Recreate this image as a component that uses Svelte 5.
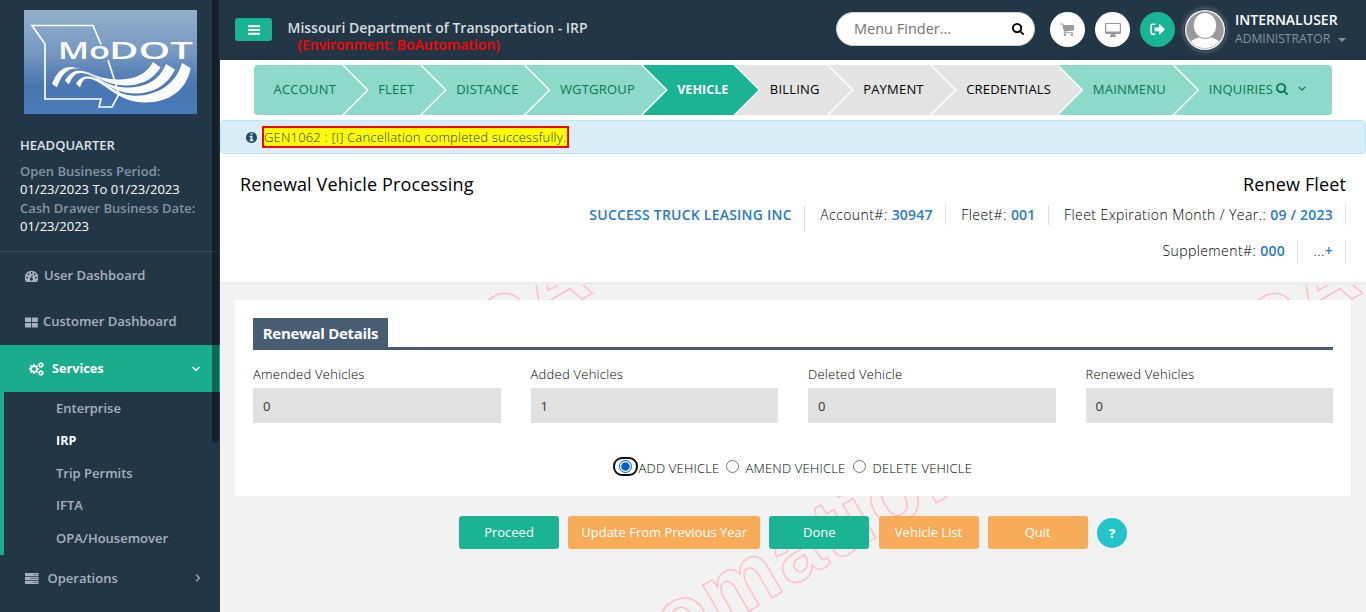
<script>
  const steps = [
    { label: 'ACCOUNT', kind: 'done', w: 112.8 },
    { label: 'FLEET', kind: 'done', w: 101 },
    { label: 'DISTANCE', kind: 'done', w: 126.7 },
    { label: 'WGTGROUP', kind: 'done', w: 140.3 },
    { label: 'VEHICLE', kind: 'active', w: 115.7 },
    { label: 'BILLING', kind: 'todo', w: 116.3 },
    { label: 'PAYMENT', kind: 'todo', w: 126 },
    { label: 'CREDENTIALS', kind: 'todo', w: 149.7 },
    { label: 'MAINMENU', kind: 'done', w: 138.8 },
    { label: 'INQUIRIES', kind: 'done', w: 157.7 }
  ];
  const services = ['Enterprise', 'IRP', 'Trip Permits', 'IFTA', 'OPA/Housemover'];
  const fields = [
    ['Amended Vehicles', '0'],
    ['Added Vehicles', '1'],
    ['Deleted Vehicle', '0'],
    ['Renewed Vehicles', '0']
  ];
  const actions = [
    ['Proceed', 'green', 100],
    ['Update From Previous Year', 'orange', 192],
    ['Done', 'green', 100],
    ['Vehicle List', 'orange', 100],
    ['Quit', 'orange', 100]
  ];
  const marks = [[436.5, 383], [1206.5, 383], [437, 791]];
  const searchPath = 'M1216 832q0-185-131.5-316.5t-316.5-131.5-316.5 131.5-131.5 316.5 131.5 316.5 316.5 131.5 316.5-131.5 131.5-316.5zm512 832q0 52-38 90t-90 38q-54 0-90-38l-343-342q-179 124-399 124-143 0-273.5-55.5t-225-150-150-225-55.5-273.5 55.5-273.5 150-225 225-150 273.5-55.5 273.5 55.5 225 150 150 225 55.5 273.5q0 220-124 399l343 343q37 37 37 90z';
  const cogPath = 'M896 896q0-106-75-181t-181-75-181 75-75 181 75 181 181 75 181-75 75-181zm384-91v185q0 10-7 19.5t-16 10.5l-155 24q-11 35-32 76 34 48 90 115 7 11 7 20 0 12-7 19-23 30-82.5 89.5t-78.5 59.5q-11 0-21-7l-115-90q-37 19-77 31-11 108-23 155-7 24-30 24h-186q-11 0-20-7.5t-10-17.5l-23-153q-34-10-75-31l-118 89q-7 7-20 7-11 0-21-8-144-133-144-160 0-9 7-19 10-14 41-53t47-61q-23-44-35-82l-152-24q-10-1-17-9.5t-7-19.5v-185q0-10 7-19.5t16-10.5l155-24q11-35 32-76-34-48-90-115-7-11-7-20 0-12 7-20 22-30 82-89t79-59q11 0 21 7l115 90q34-18 77-32 11-108 23-154 7-24 30-24h186q11 0 20 7.5t10 17.5l23 153q34 10 75 31l118-89q8-7 20-7 11 0 21 8 144 133 144 160 0 8-7 19-12 16-42 54t-45 60q23 48 34 82l152 23q10 2 17 10.5t7 19.5z';
  let choice = $state('add');
</script>

<div class="app">
  <aside>
    <svg class="logo" width="173" height="104" viewBox="0 0 173 104">
      <defs>
        <linearGradient id="sky" x1="0" y1="0" x2="0" y2="1">
          <stop offset="0" stop-color="#93afca" />
          <stop offset=".4" stop-color="#7799c2" />
          <stop offset=".72" stop-color="#4a76b1" />
          <stop offset="1" stop-color="#4a7ab8" />
        </linearGradient>
      </defs>
      <rect width="173" height="104" fill="url(#sky)" />
      <path d="M77 34.500 69 15.500H8L21 34v55h56l-2 8h13l7-13-11-34" fill="none" stroke="#fff" stroke-width="1.700" />
      <g fill="#fff">
        <path d="M28 74C33 61 40 56 49 57.200c10 1.300 17 7 28 10 8 2 15 2.500 23 2 15-1 24-8 29-17.200l7.500 5.500C129 70 116 75.500 102 75.500c-24 0-37-16.500-50-17-9-.3-15 7-19 18.800z" />
        <path d="M41 70.500c5-8.500 10-10.500 16-9.700 14 2 24 16.700 45 16.700 20 0 33-7 40-23.500l9 5.500C143 76 129 83.500 111 83.500c-25 0-37-19-53-20.500-7-.6-10 4-13 11.500z" />
        <path d="M52 73.500c4-6 8-7.500 13-7 15 2 25 19 46 19.200 22 .2 41-11.700 47-32.700l8.500 5C163 80 145 92.500 121 92.500c-29 0-41-22.500-57-24-4-.3-6 3-8 9z" />
      </g>
      <g fill="#fff" font-family="Open Sans, sans-serif" font-size="23">
        <text x="34" y="48.500" textLength="31" lengthAdjust="spacingAndGlyphs">M</text>
        <text x="65" y="48.500" textLength="21" lengthAdjust="spacingAndGlyphs">o</text>
        <text x="85" y="48.500" textLength="84" lengthAdjust="spacingAndGlyphs">DOT</text>
      </g>
    </svg>
    <div class="office">
      <strong>HEADQUARTER</strong>
      <span>Open Business Period:</span>
      <b>01/23/2023 To 01/23/2023</b>
      <span>Cash Drawer Business Date:</span>
      <b>01/23/2023</b>
    </div>
    <nav>
      <div class="item first">
        <svg width="13" height="11" viewBox="0 0 13 11">
          <path fill="currentColor" fill-rule="evenodd" d="M6.500 0A6.500 6.500 0 0 0 1 10.400q.4.600 1 .6h9q.6 0 1-.6A6.500 6.500 0 0 0 6.500 0zM2 5.600a.9.900 0 1 1 0 1.800.9.900 0 0 1 0-1.800zM3.400 2.400a.9.900 0 1 1 0 1.800.9.900 0 0 1 0-1.800zM6.500 1a.9.900 0 1 1 0 1.800.9.900 0 0 1 0-1.800zM9.600 2.400a.9.900 0 1 1 0 1.800.9.900 0 0 1 0-1.800zM11 5.600a.9.900 0 1 1 0 1.800.9.900 0 0 1 0-1.800zM6.900 3.800l.8.200-.6 3a1.400 1.400 0 1 1-.9-.2z" />
        </svg>
        <span>User Dashboard</span>
      </div>
      <div class="item second">
        <svg width="13" height="11" viewBox="0 0 13 11"><path fill="currentColor" d="M0 .5h6v4.500H0zM6.800.500h6v4.500h-6zM0 6h6v4.500H0zM6.800 6h6v4.500h-6z" /></svg>
        <span>Customer Dashboard</span>
      </div>
      <div class="item open">
        <svg width="15" height="14" viewBox="0 0 1920 1792">
          <path fill="currentColor" d={cogPath} />
          <g fill="none" stroke="currentColor">
            <circle cx="1536" cy="384" r="210" stroke-width="190" /><circle cx="1536" cy="384" r="320" stroke-width="120" stroke-dasharray="168 167" />
            <circle cx="1536" cy="1408" r="210" stroke-width="190" /><circle cx="1536" cy="1408" r="320" stroke-width="120" stroke-dasharray="168 167" />
          </g>
        </svg>
        <span>Services</span>
        <svg class="arrow" width="8" height="6" viewBox="0 0 8 6"><path d="M.6 1 4 4.400 7.400 1" fill="none" stroke="currentColor" stroke-width="1.300" /></svg>
      </div>
      <ul>
        {#each services as s}
          <li class:current={s === 'IRP'}>{s}</li>
        {/each}
      </ul>
      <div class="item ops">
        <svg width="14" height="11" viewBox="0 0 14 11">
          <path fill="currentColor" d="M0 0h13.500v3.200H0zM0 3.900h13.500v3.200H0zM0 7.800h13.500V11H0z" />
          <path stroke="#233646" stroke-width=".7" d="M8 1.600h4.500M5 5.500h7.500M8 9.400h4.500" opacity=".7" />
        </svg>
        <span>Operations</span>
        <svg class="arrow" width="6" height="8" viewBox="0 0 6 8"><path d="M1 .6 4.400 4 1 7.400" fill="none" stroke="currentColor" stroke-width="1.300" /></svg>
      </div>
    </nav>
    <div class="thumb"></div>
  </aside>

  <main>
    <svg class="watermark" width="1366" height="612" viewBox="0 0 1366 612">
      {#each marks as [x, y]}
        <text transform="translate({x} {y}) rotate(-30)">BoAutomation</text>
      {/each}
    </svg>

    <header>
      <button class="burger" aria-label="Menu">
        <svg width="12" height="10" viewBox="0 0 12 10"><path d="M0 1.200h12M0 5h12M0 8.800h12" stroke="#fff" stroke-width="1.900" /></svg>
      </button>
      <div class="title">
        <span>Missouri Department of Transportation - IRP</span>
        <em>(Environment: BoAutomation)</em>
      </div>
      <div class="finder">
        <span>Menu Finder...</span>
        <svg width="12" height="12" viewBox="64 128 1664 1664"><path d={searchPath} /></svg>
      </div>
      <div class="round cart">
        <svg width="15" height="13" viewBox="0 0 15 13">
          <path fill="#999" d="M0 .4h2.600q.6 0 .7.700l.2.900h10q.6 0 .6.600v4.200q0 .5-.5.600l-9 1 .2.800h8.100v1.100H4.200q-.6 0-.6-.5L4 8.900 2.300 1.500H0z" />
          <circle cx="5" cy="11.700" r="1.200" fill="#999" /><circle cx="12" cy="11.700" r="1.200" fill="#999" />
        </svg>
      </div>
      <div class="round screen">
        <svg width="16" height="14" viewBox="0 0 16 14">
          <path fill="#999" fill-rule="evenodd" d="M1 0h14q1 0 1 1v9q0 1-1 1h-5l.4 1.800h.8V14H4.800v-1.200h.8L6 11H1q-1 0-1-1V1q0-1 1-1zm.2 1v7.400h13.600V1z" />
        </svg>
      </div>
      <div class="round exit">
        <svg width="15" height="13" viewBox="0 0 15 13">
          <path fill="none" stroke="#fff" stroke-width="1.500" d="M5.300 1.300H3Q1 1.300 1 3.300v6Q1 11.300 3 11.300h2.300" />
          <path fill="#fff" d="M4.500 4.500H9V1.300q.2-.5.700-.2l4.900 4.800q.4.400 0 .8l-4.900 4.800q-.5.300-.7-.2V8.200H4.500z" />
        </svg>
      </div>
      <svg class="avatar" width="42" height="42" viewBox="0 0 42 42">
        <defs><clipPath id="face"><circle cx="21" cy="21" r="18.500" /></clipPath></defs>
        <circle cx="21" cy="21" r="20" fill="#fff" />
        <g clip-path="url(#face)">
          <circle cx="21" cy="21" r="18.500" fill="#999" />
          <path fill="#fff" d="M4 37c2-6 8-8 13-9h8c5 1 11 3 13 9v5H4z" />
          <ellipse cx="21" cy="16.500" rx="11.700" ry="13" fill="#fff" stroke="#999" stroke-width="1" />
        </g>
        <circle cx="21" cy="21" r="18.500" fill="none" stroke="#999" stroke-width=".6" />
      </svg>
      <div class="user">
        <strong>INTERNALUSER</strong>
        <span>ADMINISTRATOR <i></i></span>
      </div>
    </header>

    <div class="wizard">
      {#each steps as s, i}
        <div class="step {s.kind}" class:head={i === 0} class:tail={i === steps.length - 1} style:width="{s.w}px">
          {s.label}
          {#if i === steps.length - 1}
            <svg class="find" width="12" height="12" viewBox="64 128 1664 1664"><path fill="currentColor" d={searchPath} /></svg>
            <svg width="8" height="6" viewBox="0 0 8 6"><path d="M.8 1 4 4.200 7.200 1" fill="none" stroke="currentColor" stroke-width="1.100" /></svg>
          {/if}
        </div>
      {/each}
    </div>

    <div class="alert">
      <svg width="11" height="11" viewBox="128 128 1536 1536"><path fill="#1f4e66" d="M1152 1376v-160q0-14-9-23t-23-9h-96v-512q0-14-9-23t-23-9h-320q-14 0-23 9t-9 23v160q0 14 9 23t23 9h96v320h-96q-14 0-23 9t-9 23v160q0 14 9 23t23 9h448q14 0 23-9t9-23zm-128-896v-160q0-14-9-23t-23-9h-192q-14 0-23 9t-9 23v160q0 14 9 23t23 9h192q14 0 23-9t9-23zm640 416q0 209-103 385.500t-279.500 279.500-385.500 103-385.500-103-279.500-279.500-103-385.500 103-385.500 279.500-279.500 385.500-103 385.500 103 279.500 279.500 103 385.500z" /></svg>
      <span>GEN1062 : [I] Cancellation completed successfully.</span>
    </div>

    <section class="summary">
      <div class="heads"><h1>Renewal Vehicle Processing</h1><h1>Renew Fleet</h1></div>
      <div class="facts one">
        <span class="company"><b>SUCCESS TRUCK LEASING INC</b></span>
        <span>Account#: <b>30947</b></span>
        <span>Fleet#: <b>001</b></span>
        <span>Fleet Expiration Month / Year.: <b>09 / 2023</b></span>
      </div>
      <div class="facts two">
        <span>Supplement#: <b>000</b></span>
        <span>...<b>+</b></span>
      </div>
    </section>

    <section class="card">
      <div class="cap"><h2>Renewal Details</h2></div>
      <div class="grid">
        {#each fields as [label, value]}
          <div class="field"><label>{label}<output>{value}</output></label></div>
        {/each}
      </div>
      <div class="radios">
        <button class="radio" class:on={choice === 'add'} aria-label="Add" onclick={() => (choice = 'add')}></button><span class="r1">ADD VEHICLE</span>
        <button class="radio" class:on={choice === 'amend'} aria-label="Amend" onclick={() => (choice = 'amend')}></button><span class="r2">AMEND VEHICLE</span>
        <button class="radio" class:on={choice === 'delete'} aria-label="Delete" onclick={() => (choice = 'delete')}></button><span class="r3">DELETE VEHICLE</span>
      </div>
    </section>

    <div class="actions">
      {#each actions as [label, tone, w]}
        <button class={tone} style:width="{w}px">{label}</button>
      {/each}
      <button class="help">?</button>
    </div>
  </main>
</div>

<style>
  :global(body) { overflow: hidden; }
  .app { display: flex; width: 1366px; height: 612px; overflow: hidden; background: #f2f2f2; font: 13px/18px 'Open Sans', sans-serif; color: #222; }
  button { border: 0; padding: 0; font: inherit; }
  svg { flex: none; display: block; }

  aside { position: relative; width: 220px; flex: none; background: #233646; color: #a7b1c2; font-weight: 600; }
  .logo { margin: 10px 0 0 24px; }
  .office { display: flex; flex-direction: column; padding: 22px 0 0 20px; height: 115px; line-height: 18.500px; border-bottom: 1px solid #34495a; white-space: nowrap; }
  .office strong { color: #dfe4ed; font-weight: 600; margin-bottom: 8px; line-height: 18px; }
  .office span { color: #8095a8; }
  .office b { color: #fff; font-weight: 500; font-size: 13px; position: relative; top: -1px; }
  .item { display: flex; align-items: center; height: 46px; padding-left: 25px; }
  .item span { padding-bottom: 2px; }
  .item.first { padding-top: 1px; }
  .item.first span { margin-left: 6px; }
  .item.second span { margin-left: 5px; }
  .item.open { height: 47px; padding-left: 29px; background: #1bab8d; color: #fff; }
  .item.open span { margin-left: 8px; font-weight: 700; font-size: 12.700px; }
  .arrow { margin-left: auto; margin-right: 20px; }
  ul { list-style: none; margin: 0; padding: 0 0 0 52px; height: 163px; border-left: 4px solid #1bab8d; }
  li { height: 32.400px; line-height: 32.400px; }
  li.current { color: #fff; font-weight: 700; font-size: 12.500px; line-height: 33.500px; }
  .item.ops span { margin-left: 8.500px; padding: 0; }
  .item.ops .arrow { margin-right: 19px; }
  .thumb { position: absolute; left: 212px; top: -4px; width: 7px; height: 446px; border-radius: 4px; background: rgba(0, 0, 0, .4); }

  main { position: relative; width: 1146px; display: flex; flex-direction: column; }
  .watermark { position: absolute; left: -220px; top: 0; clip-path: inset(0 0 0 220px); }
  .watermark text { font: 700 86px 'Liberation Sans', Arial, sans-serif; letter-spacing: 2.800px; fill: none; stroke: pink; stroke-width: 1.500px; }
  header, .wizard, .alert, .summary, .card, .actions { position: relative; }

  header { height: 60px; flex: none; box-sizing: border-box; display: flex; align-items: center; background: #233646; padding-left: 15px; }
  .burger { width: 37px; height: 23px; border-radius: 3px; background: #1ab394; display: flex; align-items: center; justify-content: center; margin-top: -1px; }
  .title { display: flex; flex-direction: column; margin: 12px 0 0 15.500px; width: 548.500px; font-size: 14px; line-height: 17px; font-weight: 600; color: #d7dde0; }
  .title em { font-style: normal; color: #f00; padding-left: 10px; }
  .finder { display: flex; align-items: center; justify-content: space-between; width: 199px; height: 34px; box-sizing: border-box; padding: 0 10px 0 17px; border-radius: 17px; background: #fff; border: 1px solid #ccc; font-size: 14.500px; color: #757575; margin-top: -2px; }
  .round { width: 35px; height: 35px; border-radius: 50%; background: #fff; display: flex; align-items: center; justify-content: center; margin: -1px 0 0 15px; }
  .round.screen, .round.exit { margin-left: 10px; }
  .round.exit { background: #1ab394; }
  .avatar { margin-left: 9px; border-radius: 50%; box-shadow: 0 0 5px rgba(255, 255, 255, .4); }
  .user { margin: -1px 0 0 9px; line-height: 18.500px; display: flex; flex-direction: column; white-space: nowrap; }
  .user strong { color: #fff; font-weight: 600; font-size: 14px; }
  .user span { color: #8095a8; font-size: 12.100px; }
  .user i { display: inline-block; border: 4px solid transparent; border-top-color: #8095a8; border-bottom: 0; margin-left: 5px; vertical-align: 1px; }

  .wizard { display: flex; height: 60px; flex: none; box-sizing: border-box; padding: 5px 0 5px 34px; background: #fff; }
  .step { box-sizing: border-box; flex: none; height: 50px; display: flex; align-items: center; margin-left: -23px; padding-left: 34.400px; font-weight: 500; letter-spacing: .2px; clip-path: polygon(0 0, calc(100% - 25px) 0, 100% 50%, calc(100% - 25px) 100%, 0 100%, 25px 50%); padding-bottom: 2px; }
  .done { background: #8dd9ca; color: #087a50; }
  .active { background: #1ab394; color: #fff; font-weight: 700; font-size: 12.500px; letter-spacing: .05px; padding-bottom: 0; }
  .todo { background: #e4e4e4; color: #000; }
  .head { margin-left: 0; padding-left: 19.500px; clip-path: polygon(0 0, calc(100% - 25px) 0, 100% 50%, calc(100% - 25px) 100%, 0 100%); border-radius: 4px 0 0 4px; }
  .tail { clip-path: polygon(0 0, 100% 0, 100% 100%, 0 100%, 25px 50%); border-radius: 0 4px 4px 0; }
  .find { margin: 0 9.500px 0 3px; }

  .alert { height: 34px; flex: none; box-sizing: border-box; display: flex; align-items: center; padding-left: 25px; background: #d9edf7; border: 1px solid #bce8f1; border-radius: 4px; box-shadow: 0 0 0 4px #fff; clip-path: inset(0 0 -4px 0); }
  .alert span { margin-left: 5px; border: 2px solid red; background: #ff0; color: #0f3a55; line-height: 18px; padding: 0; white-space: nowrap; width: 303px; font-weight: 300; letter-spacing: .19px; }

  .summary { height: 131px; flex: none; box-sizing: border-box; background: #fff; border-bottom: 3px solid #ededed; padding: 18px 20px 0; color: #000; }
  h1 { margin: 0; font-size: 18px; line-height: 24px; font-weight: 500; color: #000; letter-spacing: .13px; }
  .heads { display: flex; justify-content: space-between; }
  .facts { display: flex; justify-content: flex-end; font-size: 14px; font-weight: 300; letter-spacing: .42px; white-space: nowrap; align-items: flex-start; }
  .facts span { border-right: 1px solid #ddd; padding: 0 12px 0 15.500px; height: 20px; line-height: 20px; }
  .facts .company { padding-left: 0; height: 25px; margin-top: 1px; line-height: 18px; }
  .facts b { color: #2a7bc3; font-weight: 600; letter-spacing: .22px; }
  .one { height: 45px; padding-top: 9px; box-sizing: border-box; }
  .two span { height: 22px; line-height: 20px; }

  .card { margin: 15px 15px 0; height: 196px; flex: none; box-sizing: border-box; background: #fff; padding: 18px 18px 0; color: #000; }
  .cap { border-bottom: 3px solid #485d71; height: 29px; display: flex; }
  h2 { margin: 0; width: 135px; text-align: center; background: #485d71; color: #fff; font-size: 15px; line-height: 30px; height: 29px; font-weight: 700; white-space: nowrap; letter-spacing: -.3px; }
  .grid { display: grid; grid-template-columns: repeat(4, 1fr); gap: 30px; padding-top: 15px; }
  .field label { display: block; font-weight: 300; letter-spacing: .25px; }
  output { display: block; height: 35px; margin-top: 5px; line-height: 36px; background: #e1e1e1; padding-left: 10px; font-weight: 400; color: #333; }
  .radios { display: flex; align-items: center; margin: 35px 0 0 365.500px; height: 20px; white-space: nowrap; font-weight: 300; letter-spacing: .2px; }
  .radio { position: relative; flex: none; width: 13px; height: 13px; box-sizing: border-box; border-radius: 50%; border: 1px solid #767676; background: #fff; margin-top: -3px; }
  .radio.on { border-color: #005fcc; background: radial-gradient(circle, #005fcc 0 3.800px, #fff 4.600px); }
  .radio.on::after { content: ''; position: absolute; inset: -4px -7px; border: 2px solid #101010; border-radius: 9px; }
  .r1 { width: 81px; margin: 0 6px 0 7px; }
  .r2 { width: 101px; margin: 0 6px 0 7px; }
  .r3 { margin: 0 7px; }

  .actions { display: flex; align-items: center; gap: 9.200px; margin: 20px 0 0 239px; height: 33px; }
  .actions button { flex: none; height: 33px; border-radius: 3px; color: #fff; font-weight: 500; white-space: nowrap; padding-bottom: 1px; }
  .green { background: #1ab394; }
  .orange { background: #f8ac59; }
  .actions .help { width: 30px; height: 30px; border-radius: 50%; background: #23c6c8; font-weight: 800; padding: 0; }
</style>
